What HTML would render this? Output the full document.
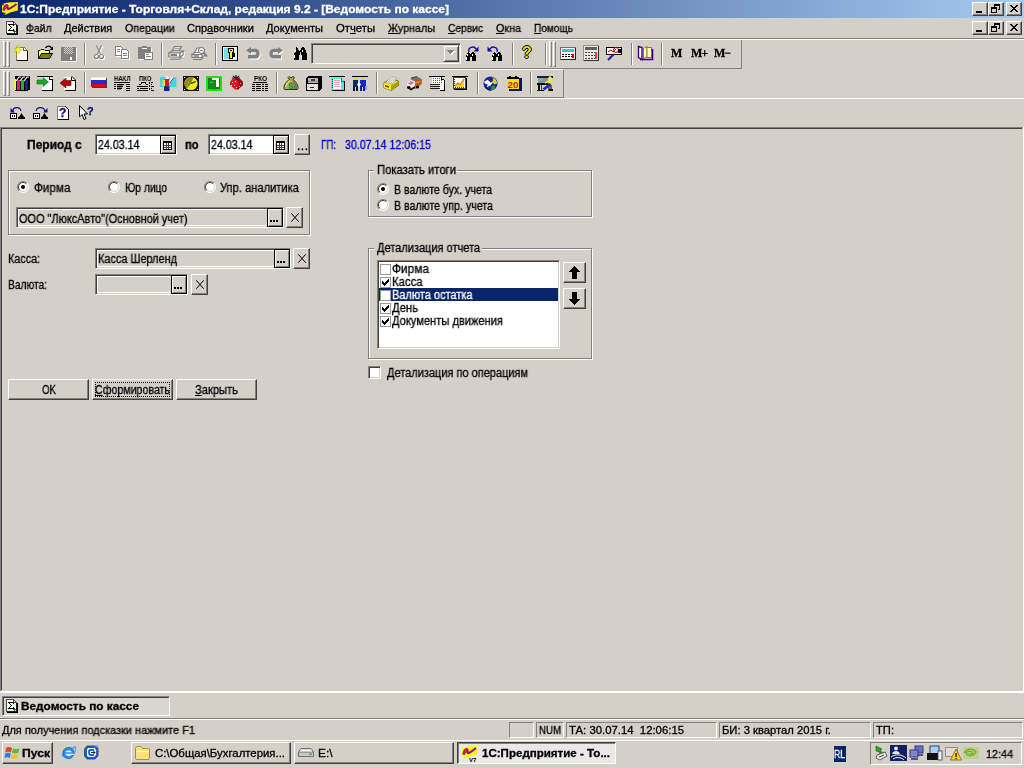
<!DOCTYPE html>
<html lang="ru">
<head>
<meta charset="utf-8">
<title>1С:Предприятие - Торговля+Склад, редакция 9.2 - [Ведомость по кассе]</title>
<style>
html,body{margin:0;padding:0;}
body{width:1024px;height:768px;overflow:hidden;background:#d4d0c8;position:relative;
 font-family:"Liberation Sans",sans-serif;font-size:11px;color:#000;}
.a{position:absolute;white-space:nowrap;}
.b{will-change:transform;}
.t{position:absolute;white-space:nowrap;line-height:14px;height:14px;will-change:transform;-webkit-text-stroke:0.3px;}
.b{font-weight:bold;}
u{text-decoration:underline;}
/* 3d borders */
.raised{position:absolute;box-sizing:border-box;background:#d4d0c8;
 border:1px solid;border-color:#fff #404040 #404040 #fff;
 box-shadow:inset -1px -1px 0 #808080, inset 1px 1px 0 #d4d0c8;}
.sunken{position:absolute;box-sizing:border-box;background:#fff;
 border:1px solid;border-color:#808080 #fff #fff #808080;
 box-shadow:inset 1px 1px 0 #404040, inset -1px -1px 0 #d4d0c8;}
.thin-sunken{position:absolute;box-sizing:border-box;border:1px solid;border-color:#808080 #fff #fff #808080;}
.thin-raised{position:absolute;box-sizing:border-box;border:1px solid;border-color:#fff #808080 #808080 #fff;}
.etched{position:absolute;box-sizing:border-box;border:1px solid #808080;box-shadow:1px 1px 0 #fff, inset 1px 1px 0 #fff;}
.sep{position:absolute;width:2px;box-sizing:border-box;border-left:1px solid #808080;border-right:1px solid #fff;}
.grip{position:absolute;width:3px;box-sizing:border-box;border:1px solid;border-color:#fff #808080 #808080 #fff;}
.hl{position:absolute;height:1px;}
.f{font-size:12px;}
svg{position:absolute;overflow:visible;}
.radio{position:absolute;width:12px;height:12px;}
.chk{position:absolute;width:13px;height:13px;box-sizing:border-box;background:#fff;
 border:1px solid;border-color:#808080 #fff #fff #808080;box-shadow:inset 1px 1px 0 #404040, inset -1px -1px 0 #d4d0c8;}
.fchk{position:absolute;left:380px;width:11px;height:11px;box-sizing:border-box;background:#fff;border:1px solid #989898;}
.gf{background:#d4d0c8;}
.gf::after{content:"";position:absolute;left:1px;top:1px;right:1px;bottom:1px;border:1px solid #fff;}
.bbtn{position:absolute;box-sizing:border-box;background:#d4d0c8;border:1px solid #000;box-shadow:inset 1px 1px 0 #fff, inset -1px -1px 0 #808080;}
</style>
</head>
<body>
<!-- TITLE BAR -->
<div id="titlebar" class="a" style="left:0;top:0;width:1024px;height:18px;background:linear-gradient(90deg,#0a246a 0%,#a6caf0 100%);"></div>
<svg style="left:2px;top:1px" width="16" height="15" viewBox="0 0 16 15">
 <path d="M0 3 L6 1.500 L15.800 1 V9.500 L8 11.500 L3 14 L0 11Z" fill="#fcf418"/>
 <path d="M0 3 L2 2.500 L1 5Z M0 11 L3 14 L3.500 12Z" fill="#181808"/>
 <path d="M1.500 9.500 C2 4 6 2.500 5.500 6 C5 9.500 8 8 14.500 3" stroke="#c01048" stroke-width="2.200" fill="none"/>
 <path d="M2 10 C4 6 5 5 5 7.500 C6 9 9 6.500 14 3.500" stroke="#5a208a" stroke-width="1" fill="none"/>
 <path d="M9 10.500 L14 9" stroke="#e8d810" stroke-width="1"/>
</svg>
<div id="title" class="t b" style="left:20px;top:2px;color:#fff;font-size:11px;transform:scaleX(1.0898);transform-origin:0 0;">1С:Предприятие - Торговля+Склад, редакция 9.2 - [Ведомость по кассе]</div>
<!-- title buttons -->
<div class="raised" style="left:972px;top:2px;width:16px;height:14px;"></div>
<div class="raised" style="left:988px;top:2px;width:16px;height:14px;"></div>
<div class="raised" style="left:1006px;top:2px;width:16px;height:14px;"></div>
<svg style="left:972px;top:2px" width="50" height="14" viewBox="0 0 50 14" shape-rendering="crispEdges">
 <rect x="4" y="9" width="6" height="2" fill="#000"/>
 <rect x="22" y="2" width="6" height="2" fill="#000"/><rect x="22" y="3" width="1" height="3" fill="#000"/><rect x="27" y="3" width="1" height="5" fill="#000"/><rect x="26" y="7" width="2" height="1" fill="#000"/>
 <rect x="19" y="5" width="6" height="2" fill="#000"/><rect x="19" y="6" width="1" height="5" fill="#000"/><rect x="24" y="6" width="1" height="5" fill="#000"/><rect x="19" y="10" width="6" height="1" fill="#000"/>
 <path d="M38 3h2v1h1v1h2v-1h1v-1h2v1h-1v1h-1v1h-1v1h1v1h1v1h1v1h-2v-1h-1v-1h-2v1h-1v1h-2v-1h1v-1h1v-1h1v-1h-1v-1h-1v-1h-1z" fill="#000"/>
</svg>

<!-- MENU BAR -->
<!-- menu doc icon -->
<svg style="left:6px;top:21px" width="13" height="14" viewBox="0 0 13 14" shape-rendering="crispEdges">
 <path d="M0.500 0.500 H7.500 L10.500 3.500 V12.500 H0.500Z" fill="#f4fbf0" stroke="#50503c" stroke-width="1"/>
 <path d="M7.500 0.500 V3.500 H10.500" fill="none" stroke="#50503c"/>
 <path d="M11.500 4 V13.500 H1" fill="none" stroke="#000"/><path d="M10.500 4V12.500H1" fill="none" stroke="#202020"/>
 <path d="M2 3h6v2h-1v-1h-3v1h1v1h1v1h-1v1h-1v1h3v-1h1v2h-6v-1h1v-1h1v-1h1v-1h-1v-1h-1v-1h-1z" fill="#000"/>
 <rect x="7" y="10" width="3" height="1" fill="#108020"/><rect x="8" y="9" width="1" height="3" fill="#108020"/>
</svg>
<div id="m1" class="t" style="left:26px;top:21px;transform:scaleX(0.9423);transform-origin:0 0;"><u>Ф</u>айл</div>
<div id="m2" class="t" style="left:64px;top:21px;transform:scaleX(1.0020);transform-origin:0 0;"><u>Д</u>ействия</div>
<div id="m3" class="t" style="left:125px;top:21px;transform:scaleX(0.9673);transform-origin:0 0;">Опе<u>р</u>ации</div>
<div id="m4" class="t" style="left:187px;top:21px;transform:scaleX(1.0019);transform-origin:0 0;">Спр<u>а</u>вочники</div>
<div id="m5" class="t" style="left:266px;top:21px;transform:scaleX(1.0047);transform-origin:0 0;">Док<u>у</u>менты</div>
<div id="m6" class="t" style="left:336px;top:21px;transform:scaleX(1.0251);transform-origin:0 0;">От<u>ч</u>еты</div>
<div id="m7" class="t" style="left:388px;top:21px;transform:scaleX(0.9779);transform-origin:0 0;"><u>Ж</u>урналы</div>
<div id="m8" class="t" style="left:448px;top:21px;transform:scaleX(0.9287);transform-origin:0 0;"><u>С</u>ервис</div>
<div id="m9" class="t" style="left:496px;top:21px;transform:scaleX(0.9774);transform-origin:0 0;"><u>О</u>кна</div>
<div id="m10" class="t" style="left:534px;top:21px;transform:scaleX(0.9176);transform-origin:0 0;"><u>П</u>омощь</div>
<div class="raised" style="left:972px;top:21px;width:16px;height:14px;"></div>
<div class="raised" style="left:988px;top:21px;width:16px;height:14px;"></div>
<div class="raised" style="left:1006px;top:21px;width:16px;height:14px;"></div>
<svg style="left:972px;top:21px" width="50" height="14" viewBox="0 0 50 14" shape-rendering="crispEdges">
 <rect x="4" y="9" width="6" height="2" fill="#000"/>
 <rect x="22" y="2" width="6" height="2" fill="#000"/><rect x="22" y="3" width="1" height="3" fill="#000"/><rect x="27" y="3" width="1" height="5" fill="#000"/><rect x="26" y="7" width="2" height="1" fill="#000"/>
 <rect x="19" y="5" width="6" height="2" fill="#000"/><rect x="19" y="6" width="1" height="5" fill="#000"/><rect x="24" y="6" width="1" height="5" fill="#000"/><rect x="19" y="10" width="6" height="1" fill="#000"/>
 <path d="M38 3h2v1h1v1h2v-1h1v-1h2v1h-1v1h-1v1h-1v1h1v1h1v1h1v1h-2v-1h-1v-1h-2v1h-1v1h-2v-1h1v-1h1v-1h1v-1h-1v-1h-1v-1h-1z" fill="#000"/>
</svg>
<div class="hl" style="left:0;top:38px;width:1024px;background:#808080;"></div>
<div class="hl" style="left:0;top:39px;width:1024px;background:#fff;"></div>

<!-- TOOLBARS -->
<!-- toolbar 1 frame -->
<div class="a" style="left:0;top:40px;width:742px;height:29px;box-sizing:border-box;border-right:1px solid #808080;border-bottom:1px solid #808080;"></div>
<div class="grip" style="left:3px;top:41px;height:26px;"></div>
<div class="grip" style="left:7px;top:41px;height:26px;"></div>
<!-- new -->
<svg style="left:14px;top:45px" width="16" height="16" viewBox="0 0 16 16">
 <defs><pattern id="chk0" width="2" height="2" patternUnits="userSpaceOnUse"><rect width="2" height="2" fill="#fff"/><rect width="1" height="1" fill="#ffffc0"/><rect x="1" y="1" width="1" height="1" fill="#ffffc0"/></pattern></defs>
 <path d="M2.500 2.500 H10.500 L13.500 5.500 V15.500 H2.500Z" fill="url(#chk0)" stroke="#808040" shape-rendering="crispEdges"/>
 <path d="M13.500 5 V15.500 H3" fill="none" stroke="#000" shape-rendering="crispEdges"/>
 <path d="M9.500 2.500 V5.500 H13.500" fill="none" stroke="#606020" shape-rendering="crispEdges"/>
 <path d="M3 0.500 L4 2.800 L6.500 1.500 L5.300 4 L8 5 L5.300 5.600 L5 8.500 L3.500 6 L0.500 7 L2.300 4.800 L0 3.300 L2.800 3.300Z" fill="#ffff20" stroke="#b0b000" stroke-width="0.500"/>
</svg>
<!-- open -->
<svg style="left:37px;top:45px" width="17" height="16" viewBox="0 0 17 16">
 <path d="M1.5 13.5 V5.5 H3 L4 4.5 H7 L8 5.5 H12.5 V8" fill="#ffffa0" stroke="#000"/>
 <path d="M1.5 13.5 L4.5 8.5 H15.5 L12.5 13.5Z" fill="#808000" stroke="#000"/>
 <path d="M8.500 3 C10 0.500 13 0.500 14.500 3" fill="none" stroke="#000" stroke-width="1.300"/><path d="M16 1.500 V5 H12.500Z" fill="#000"/>
</svg>
<!-- save disabled -->
<svg style="left:61px;top:47px" width="16" height="15" viewBox="0 0 16 15" shape-rendering="crispEdges">
 <defs><pattern id="chk1" width="2" height="2" patternUnits="userSpaceOnUse"><rect width="2" height="2" fill="#808080"/><rect width="1" height="1" fill="#d4d0c8"/><rect x="1" y="1" width="1" height="1" fill="#d4d0c8"/></pattern></defs>
 <rect x="0" y="0" width="15" height="14" fill="#808080"/>
 <rect x="3" y="0" width="9" height="7" fill="url(#chk1)"/>
 <rect x="9" y="10" width="2" height="3" fill="#fff"/>
 <rect x="1" y="14" width="15" height="1" fill="#fff"/><rect x="15" y="1" width="1" height="14" fill="#fff"/>
</svg>
<div class="sep" style="left:84px;top:43px;height:22px;"></div>
<!-- cut disabled -->
<svg style="left:94px;top:45px" width="12" height="16" viewBox="0 0 12 16">
 <g fill="none" stroke="#fff" stroke-width="1.300" transform="translate(1,1)"><path d="M2.500 0.500 L6.500 9 M7.500 0.500 L3.500 9"/><circle cx="2.500" cy="11.500" r="2"/><circle cx="7.500" cy="11.500" r="2"/></g>
 <g fill="none" stroke="#808080" stroke-width="1.100"><path d="M2.500 0.500 L6.500 9 M7.500 0.500 L3.500 9"/><circle cx="2.500" cy="11.500" r="2"/><circle cx="7.500" cy="11.500" r="2"/></g>
</svg>
<!-- copy disabled -->
<svg style="left:115px;top:46px" width="16" height="15" viewBox="0 0 16 15" shape-rendering="crispEdges">
 <path d="M1.500 1.500 H6.500 L8.500 3.500 V10.500 H1.500Z" fill="none" stroke="#fff" stroke-width="1"/>
 <path d="M7.500 4.500 H12.500 L14.500 6.500 V13.500 H7.500Z" fill="none" stroke="#fff" stroke-width="1"/>
 <path d="M0.500 0.500 H5.500 L7.500 2.500 V9.500 H0.500Z" fill="#fff" stroke="#808080"/>
 <path d="M6.500 3.500 H11.500 L13.500 5.500 V12.500 H6.500Z" fill="#fff" stroke="#808080"/>
 <path d="M2 3.500H5M2 5.500H5M8 7.500H12M8 9.500H12" fill="none" stroke="#808080"/>
</svg>
<!-- paste disabled -->
<svg style="left:138px;top:46px" width="16" height="15" viewBox="0 0 16 15" shape-rendering="crispEdges">
 <rect x="1" y="2" width="13" height="12" fill="#fff"/>
 <rect x="0" y="1" width="13" height="12" fill="#808080"/>
 <rect x="4" y="0" width="5" height="2" fill="#808080"/>
 <rect x="4" y="2" width="5" height="1" fill="#fff"/>
 <rect x="7" y="7" width="8" height="7" fill="#fff"/>
 <rect x="6.500" y="6.500" width="8" height="7" fill="#fff" stroke="#808080"/>
 <path d="M8 8.500H11M8 10.500H13" stroke="#808080" fill="none"/>
</svg>
<div class="sep" style="left:161px;top:43px;height:22px;"></div>
<!-- print disabled -->
<svg style="left:168px;top:46px" width="17" height="15" viewBox="0 0 17 15">
 <g transform="translate(1,1)" fill="none" stroke="#fff" stroke-width="1.200"><path d="M1 7 V11.500 H11 L15 9 V5"/></g>
 <g fill="#fff" stroke="#808080" stroke-width="1.200"><path d="M4 5 L6.500 0.600 H13.500 L11 5Z"/><path d="M1 7 L4 5 H15 L12 7 Z"/><path d="M1 7 V11 H12 V7Z"/><path d="M12 11 L15 9 V5 L12 7Z"/></g>
 <path d="M2.500 9 H9" stroke="#808080" stroke-width="2"/>
 <path d="M2 13.200 H11 L14 11.500" stroke="#808080" stroke-width="1.300" fill="none"/>
 <path d="M6.500 2.500H12M5.500 4H11" stroke="#808080" stroke-width="0.700" fill="none"/>
</svg>
<!-- preview disabled -->
<svg style="left:191px;top:45px" width="17" height="16" viewBox="0 0 17 16">
 <g fill="#fff" stroke="#808080" stroke-width="1.200"><path d="M3.500 7.500 L6 3 H11 L9 7.500Z"/><path d="M1 9.500 L4 7.500 H13 L11 9.500Z"/><path d="M1 9.500 V12.500 H11 V9.500Z"/><path d="M11 12.500 L13.500 10.500 V7.500"/></g>
 <path d="M2.500 11 H8" stroke="#808080" stroke-width="1.600"/>
 <path d="M2 14.500H10 L12 13" stroke="#808080" stroke-width="1.200" fill="none"/>
 <circle cx="10.500" cy="5.500" r="3" fill="#fff" stroke="#808080" stroke-width="1.200"/>
 <path d="M9 5.500H12" stroke="#808080"/>
 <path d="M13 8 L16 11.500" stroke="#808080" stroke-width="1.800"/>
</svg>
<div class="sep" style="left:215px;top:43px;height:22px;"></div>
<!-- key -->
<svg style="left:222px;top:46px" width="16" height="15" viewBox="0 0 16 15" shape-rendering="crispEdges">
 <rect x="0.500" y="0.500" width="15" height="14" fill="#e4f4f8" stroke="#000"/>
 <rect x="2" y="2" width="5" height="11" fill="#78dce8"/>
 <rect x="1" y="13" width="14" height="1" fill="#f4e8f8"/>
 <path d="M6.500 2.500 H11.500 V6.500 H10.500 V7.500 H12.500 V8.500 H10.500 V9.500 H12.500 V10.500 H10.500 V12.500 H7.500 V6.500 H6.500Z" fill="#f4f020" stroke="#000" stroke-width="1"/>
 <rect x="8" y="4" width="2" height="1" fill="#000"/>
</svg>
<!-- undo disabled -->
<svg style="left:246px;top:47px" width="15" height="13" viewBox="0 0 15 13">
 <path d="M5 0 L0 3.500 L5 7 V5.200 H9 C10.800 5.200 10.800 8 9 8 H2 V11.500 H9.500 C15 11.500 15 1.800 9.500 1.800 H5Z" fill="#fff" transform="translate(1,1)"/>
 <path d="M5 0 L0 3.500 L5 7 V5.200 H9 C10.800 5.200 10.800 8 9 8 H2 V11.500 H9.500 C15 11.500 15 1.800 9.500 1.800 H5Z" fill="#808080"/>
</svg>
<!-- redo disabled -->
<svg style="left:269px;top:47px" width="15" height="13" viewBox="0 0 15 13">
 <g transform="translate(14,0) scale(-1,1)">
 <path d="M5 0 L0 3.500 L5 7 V5.200 H9 C10.800 5.200 10.800 8 9 8 H2 V11.500 H9.500 C15 11.500 15 1.800 9.500 1.800 H5Z" fill="#fff" transform="translate(-1,1)"/>
 <path d="M5 0 L0 3.500 L5 7 V5.200 H9 C10.800 5.200 10.800 8 9 8 H2 V11.500 H9.500 C15 11.500 15 1.800 9.500 1.800 H5Z" fill="#808080"/></g>
</svg>
<!-- binoculars -->
<svg style="left:292px;top:47px" width="15" height="13" viewBox="0 0 15 13" shape-rendering="crispEdges"><path d="M3 0h2v1h1v2h1v1h1v-1h1v-2h1v-1h2v1h1v2h1v3h1v7h-5v-5h-1v-3h-1v3h-1v5h-5v-7h1v-3h1v-2h1z" fill="#000"/><rect x="3" y="3" width="1" height="2" fill="#fff"/><rect x="10" y="3" width="1" height="2" fill="#fff"/><rect x="2" y="8" width="1" height="3" fill="#fff"/><rect x="9" y="8" width="1" height="3" fill="#fff"/></svg>
<!-- combo -->
<div class="sunken" style="left:311px;top:43px;width:150px;height:21px;background:#d4d0c8;"></div>
<div class="a" style="left:443px;top:45px;width:16px;height:17px;box-sizing:border-box;background:#d4d0c8;border:1px solid;border-color:#d4d0c8 #404040 #404040 #d4d0c8;box-shadow:inset 1px 1px 0 #fff, inset -1px -1px 0 #808080;"></div>
<svg style="left:447px;top:50px" width="8" height="5" viewBox="0 0 8 5" shape-rendering="crispEdges"><path d="M1 1h7v1h-1v1h-1v1h-1v1h-1v-1h-1v-1h-1v-1h-1z" fill="#fff"/><path d="M0 0h7v1h-1v1h-1v1h-1v1h-1v-1h-1v-1h-1v-1h-1z" fill="#808080"/></svg>
<!-- find next / prev -->
<svg style="left:465px;top:52px" width="11" height="9" viewBox="0 0 11 9" shape-rendering="crispEdges"><path d="M2 0h2v1h1v1h1v-1h1v-1h2v1h1v2h1v6h-4v-4h-2v4h-4v-6h1v-2h1z" fill="#000"/><rect x="2" y="2" width="1" height="2" fill="#fff"/><rect x="7" y="2" width="1" height="2" fill="#fff"/><rect x="1" y="5" width="1" height="3" fill="#fff"/><rect x="6" y="5" width="1" height="3" fill="#fff"/></svg>
<svg style="left:467px;top:45px" width="12" height="8" viewBox="0 0 12 8"><path d="M2 7 C0.500 2 7 0.500 9 4" fill="none" stroke="#1010a0" stroke-width="1.400"/><path d="M11.500 1.500 V6.500 H6.500Z" fill="#1010a0"/></svg>
<svg style="left:491px;top:52px" width="11" height="9" viewBox="0 0 11 9" shape-rendering="crispEdges"><path d="M2 0h2v1h1v1h1v-1h1v-1h2v1h1v2h1v6h-4v-4h-2v4h-4v-6h1v-2h1z" fill="#000"/><rect x="2" y="2" width="1" height="2" fill="#fff"/><rect x="7" y="2" width="1" height="2" fill="#fff"/><rect x="1" y="5" width="1" height="3" fill="#fff"/><rect x="6" y="5" width="1" height="3" fill="#fff"/></svg>
<svg style="left:487px;top:45px" width="12" height="8" viewBox="0 0 12 8"><path d="M10 7 C11.500 2 5 0.500 3 4" fill="none" stroke="#1010a0" stroke-width="1.400"/><path d="M0.500 1.500 V6.500 H5.500Z" fill="#1010a0"/></svg>
<div class="sep" style="left:512px;top:43px;height:22px;"></div>
<!-- help ? -->
<div id="qm" class="a b" style="left:522px;top:43px;font-size:16px;line-height:20px;color:#e8e000;text-shadow:1px 0 0 #000,-1px 0 0 #000,0 1px 0 #000,0 -1px 0 #000;">?</div>
<div class="sep" style="left:545px;top:43px;height:22px;"></div>
<div class="grip" style="left:549px;top:41px;height:26px;"></div>
<div class="grip" style="left:553px;top:41px;height:26px;"></div>
<!-- calculator -->
<svg style="left:560px;top:47px" width="16" height="13" viewBox="0 0 16 13" shape-rendering="crispEdges">
 <rect x="0.5" y="0.5" width="15" height="12" fill="#fff" stroke="#707070"/><path d="M1 12.500H15.500V1" stroke="#202020" fill="none"/>
 <rect x="2" y="2" width="12" height="3" fill="#40c0c0"/>
 <path d="M2 7.5H14M2 9.5H14" stroke="#000" stroke-dasharray="2 1" fill="none"/><rect x="12" y="7" width="2" height="4" fill="#c00000"/>
</svg>
<!-- calendar/calc2 -->
<svg style="left:583px;top:45px" width="16" height="16" viewBox="0 0 16 16" shape-rendering="crispEdges">
 <rect x="0.5" y="0.5" width="15" height="15" fill="#ece8e0" stroke="#909090"/><path d="M1 15.500H15.500V1" stroke="#303030" fill="none"/>
 <rect x="2" y="2" width="12" height="3" fill="#606060"/>
 <path d="M2 7.5H14M2 10.5H14M2 13.5H14" stroke="#404040" stroke-dasharray="2 1" fill="none"/><rect x="12" y="7" width="2" height="7" fill="#e04040"/>
</svg>
<!-- tool -->
<svg style="left:605px;top:45px" width="18" height="16" viewBox="0 0 18 16">
 <rect x="1.5" y="2.5" width="15" height="7" fill="#fff" stroke="#000"/>
 <path d="M3 7 L6 5 L8 7 L11 4" stroke="#c00000" fill="none"/><circle cx="11" cy="5" r="2.5" fill="none" stroke="#c00000"/>
 <rect x="13" y="4" width="3" height="4" fill="#000"/>
 <path d="M9 9 L3 15" stroke="#2020a0" stroke-width="2.2"/>
</svg>
<div class="sep" style="left:631px;top:43px;height:22px;"></div>
<!-- book -->
<svg style="left:637px;top:45px" width="17" height="16" viewBox="0 0 17 16">
 <path d="M1.5 1.5 L5 2.5 V14.5 L1.5 12.5Z" fill="#fff" stroke="#400080" stroke-width="1.4"/>
 <path d="M6.5 3.5 L10 1.5 V11.5 L6.5 13.5Z" fill="#ffffc0" stroke="#806000" stroke-width="0.8"/>
 <path d="M10 2.5 H14.5 V12.5 H10Z" fill="#ffffc0" stroke="#806000" stroke-width="0.8"/>
 <path d="M3 14.5 H15.5 V4" fill="none" stroke="#400080" stroke-width="1.6"/>
</svg>
<div class="sep" style="left:661px;top:43px;height:22px;"></div>
<div id="mm1" class="a b" style="left:671px;top:45px;font-family:'Liberation Serif',serif;font-size:12px;line-height:16px;-webkit-text-stroke:0.3px;">M</div>
<div id="mm2" class="a b" style="left:691px;top:45px;letter-spacing:-1px;font-family:'Liberation Serif',serif;font-size:12px;line-height:16px;-webkit-text-stroke:0.3px;">M+</div>
<div id="mm3" class="a b" style="left:714px;top:45px;letter-spacing:-1px;font-family:'Liberation Serif',serif;font-size:12px;line-height:16px;-webkit-text-stroke:0.3px;">M−</div>

<!-- toolbar 2 frame -->
<div class="a" style="left:0;top:69px;width:564px;height:29px;box-sizing:border-box;border-top:1px solid #fff;border-right:1px solid #808080;border-bottom:1px solid #808080;"></div>
<div class="grip" style="left:3px;top:71px;height:25px;"></div>
<div class="grip" style="left:7px;top:71px;height:25px;"></div>
<!-- books -->
<svg style="left:14px;top:76px" width="16" height="15" viewBox="0 0 16 15" shape-rendering="crispEdges">
 <rect x="1" y="0" width="15" height="14" fill="#000"/>
 <rect x="0" y="3" width="2" height="11" fill="#f0f060"/>
 <rect x="3" y="4" width="3" height="10" fill="#d02868"/>
 <rect x="7" y="4" width="3" height="10" fill="#20b040"/>
 <rect x="11" y="4" width="3" height="10" fill="#182088"/>
 <rect x="1" y="14" width="13" height="1" fill="#000"/>
 <path d="M2 5 L5 1 H7 M6 5 L9 1 H11 M10 5 L13 1 H15" stroke="#fff" stroke-width="1.200" fill="none" shape-rendering="auto"/>
</svg>
<!-- green arrow doc -->
<svg style="left:37px;top:76px" width="16" height="15" viewBox="0 0 16 15">
 <path d="M5 1 H13 L15 3 V14 H5Z" fill="#fff" shape-rendering="crispEdges"/>
 <path d="M0 0.500 H16" stroke="#000" stroke-width="1.400" shape-rendering="crispEdges"/>
 <path d="M5 14.500H15.500V2.500 M12.500 1 V3.500 H15" stroke="#000" fill="none" shape-rendering="crispEdges"/>
 <path d="M0 4 H6 V1.500 L11.500 6 L6 10.500 V8 H0Z" fill="#18a828" stroke="#0c6814" stroke-width="0.600"/>
</svg>
<!-- red arrow doc -->
<svg style="left:60px;top:76px" width="16" height="15" viewBox="0 0 16 15">
 <path d="M4 0.500 H11.500 L15 4 V14 H4Z" fill="#fff" shape-rendering="crispEdges"/>
 <path d="M5 14.500H15.500V4 L12 0.500 M11.500 1 V4.500 H15" stroke="#000" fill="none"/>
 <path d="M11 4.500 H6 V2 L0 7 L6 12 V9.500 H11Z" fill="#b00808" stroke="#600404" stroke-width="0.600"/>
</svg>
<div class="sep" style="left:84px;top:72px;height:22px;"></div>
<!-- flag -->
<svg style="left:91px;top:77px" width="16" height="12" viewBox="0 0 16 12" shape-rendering="crispEdges">
 <rect x="0" y="0" width="15" height="4" fill="#fff"/><rect x="0" y="3" width="15" height="4" fill="#2030d0"/><rect x="0" y="7" width="15" height="3" fill="#d01010"/>
 <rect x="1" y="10" width="15" height="1" fill="#404040"/><rect x="15" y="1" width="1" height="10" fill="#404040"/>
 <rect x="0" y="0" width="15" height="1" fill="#e8e8e8"/>
</svg>
<!-- НАКЛ -->
<div id="i_nakl" class="a b" style="left:114px;top:74px;font-size:7px;line-height:9px;transform:scaleX(0.8551);transform-origin:0 0;">НАКЛ</div>
<svg style="left:114px;top:82px" width="16" height="9" viewBox="0 0 16 9" shape-rendering="crispEdges">
 <path d="M0 0.500H16" stroke="#000"/><path d="M0 2.500H2M0 4.500H2M0 6.500H2" stroke="#000"/><path d="M3 2.500H10M3 4.500H9M3 6.500H8" stroke="#000"/><path d="M12 2.500H16M12 4.500H16M12 6.500H16M12 8.500H16" stroke="#000"/><path d="M3 3.500H9M3 5.500H8M3 7.500H7" stroke="#808080"/>
</svg>
<!-- ПКО -->
<div id="i_pko" class="a b" style="left:139px;top:74px;font-size:7px;line-height:9px;transform:scaleX(0.8475);transform-origin:0 0;">ПКО</div>
<svg style="left:137px;top:82px" width="17" height="9" viewBox="0 0 17 9" shape-rendering="crispEdges">
 <path d="M4 0.500H9" stroke="#000"/><path d="M2 2.500H4M9 2.500H11M0 4.500H11M0 6.500H2M3 6.500H11M0 8.500H11" stroke="#000"/><path d="M4 1.500H5M8 1.500H9" stroke="#000"/>
 <path d="M12.500 0V9" stroke="#000" stroke-dasharray="2 1"/><path d="M14 0.500H16M14 2.500H15M14 4.500H17M14 6.500H15M14 8.500H17" stroke="#000"/>
</svg>
<!-- person -->
<svg style="left:160px;top:76px" width="17" height="15" viewBox="0 0 17 15">
 <rect x="0" y="1" width="6" height="10" fill="#48d0e8"/>
 <path d="M9 3 L16.500 1 V11 H9Z" fill="#48d0e8"/>
 <rect x="5.500" y="0" width="3" height="3" fill="#f8e8e8"/>
 <rect x="4.500" y="3" width="4.500" height="8" fill="#d01828"/>
 <rect x="2.500" y="4" width="2.500" height="6" fill="#f0e020"/>
 <rect x="4" y="10.500" width="5.500" height="4.500" fill="#1020a0"/>
 <path d="M9.500 7 L13.500 1.500" stroke="#202020" stroke-width="1"/>
 <path d="M9 6.300 L13 0.800" stroke="#fff" stroke-width="1.300"/>
</svg>
<!-- yellow clock -->
<svg style="left:183px;top:76px" width="16" height="15" viewBox="0 0 16 15">
 <rect x="0" y="0" width="16" height="15" fill="#101010" shape-rendering="crispEdges"/>
 <circle cx="8" cy="7.500" r="6.600" fill="#f0e820"/>
 <path d="M8 7.500 L10.500 1.500 A6.600 6.600 0 0 0 4 12.700 Z" fill="#888818"/>
 <path d="M8 7.500 L12.500 5.500" stroke="#202000" stroke-width="1.300"/>
 <path d="M5 6 L6 7 M4 9.500 L5 10" stroke="#d0d060" stroke-width="0.800"/>
 <g fill="#fff" shape-rendering="crispEdges"><rect x="1" y="1" width="1" height="1"/><rect x="14" y="1" width="1" height="1"/><rect x="1" y="13" width="1" height="1"/><rect x="14" y="13" width="1" height="1"/></g>
</svg>
<!-- green door -->
<svg style="left:206px;top:76px" width="16" height="15" viewBox="0 0 16 15" shape-rendering="crispEdges">
 <rect x="0" y="0" width="16" height="15" fill="#20e020"/>
 <rect x="2" y="2" width="12" height="11" fill="#108010"/>
 <path d="M6 2 H13 V11 H10 V4 H6Z" fill="#fff"/>
 <path d="M3 3 L9 5 V14 L3 12Z" fill="#188c18" shape-rendering="auto"/>
 <path d="M4 6 L7 7" stroke="#60c060" shape-rendering="auto"/>
</svg>
<!-- berry -->
<svg style="left:229px;top:75px" width="15" height="15" viewBox="0 0 15 15">
 <path d="M4 1 L7 4 L10 1 M7 0 V4 M3 3 L7 4 L11 3" stroke="#101010" stroke-width="1.200" fill="none"/>
 <path d="M4 3 H10 L14 7 V10 L9 14.500 H6 L1 10 V7Z" fill="#d81820"/>
 <path d="M8 3 H10 L14 7 V10 L9 14.500 H8 L10 9Z" fill="#901018"/>
 <path d="M6 1 L9 5 L7 5Z" fill="#202020"/>
 <g fill="#fff"><rect x="3" y="7" width="1" height="1"/><rect x="6" y="6" width="1" height="1"/><rect x="5" y="10" width="1" height="1"/><rect x="2" y="10" width="1" height="1"/><rect x="7" y="12" width="1" height="1"/><rect x="11" y="8" width="1" height="1" opacity="0.700"/><rect x="10" y="11" width="1" height="1" opacity="0.700"/></g>
</svg>
<!-- РКО -->
<div id="i_rko" class="a b" style="left:254px;top:74px;font-size:7px;line-height:9px;transform:scaleX(0.9034);transform-origin:0 0;">РКО</div>
<svg style="left:252px;top:82px" width="16" height="9" viewBox="0 0 16 9" shape-rendering="crispEdges">
 <path d="M1 0.5H15" stroke="#000"/><path d="M0 2.5H16M0 4.5H16M0 6.5H16M0 8.5H16" stroke="#000" stroke-dasharray="3 1 5 1 2 1"/>
</svg>
<div class="sep" style="left:276px;top:72px;height:22px;"></div>
<!-- money bag -->
<svg style="left:283px;top:76px" width="16" height="14" viewBox="0 0 16 14">
 <path d="M6 0.500 L8 2 L10 0.500 L11.500 1.500 L10 3.500 C13 5.500 15.500 9.500 15 12.500 L14.500 13.500 H1.500 L1 12.500 C0.500 9.500 3 5.500 6.500 3.500 L5 1.500Z" fill="#a8a860" stroke="#282808" stroke-width="0.900"/>
 <path d="M9.500 4 C12.500 6 14.500 9.500 14.300 12.500 L14 13 H10.500 C11 10 10.500 7 9.500 4Z" fill="#787858"/>
 <path d="M3 11 C3 8 5 6 7 4.500" stroke="#e0e060" stroke-width="1.200" fill="none"/>
 <text x="5.500" y="12.500" font-family="Liberation Sans, sans-serif" font-weight="bold" font-size="9" fill="#189818">$</text>
</svg>
<!-- drawer -->
<svg style="left:306px;top:76px" width="16" height="15" viewBox="0 0 16 15" shape-rendering="crispEdges">
 <defs><pattern id="chk2" width="2" height="2" patternUnits="userSpaceOnUse"><rect width="2" height="2" fill="#fff"/><rect width="1" height="1" fill="#c8c8c8"/><rect x="1" y="1" width="1" height="1" fill="#c8c8c8"/></pattern></defs>
 <path d="M0 2 L2 0 H16 V12 L13 15 H0Z" fill="#000"/>
 <rect x="2" y="2" width="10" height="5" fill="#b8b8b8"/>
 <rect x="5" y="3" width="4" height="2" fill="#404040"/>
 <rect x="2" y="5" width="10" height="1" fill="#909090"/>
 <rect x="1" y="8" width="11" height="6" fill="url(#chk2)"/>
 <rect x="4" y="11" width="4" height="1" fill="#202020"/>
</svg>
<!-- cyan doc -->
<svg style="left:329px;top:76px" width="16" height="15" viewBox="0 0 16 15" shape-rendering="crispEdges">
 <path d="M0 0.500H16" stroke="#000" stroke-width="1.400"/>
 <path d="M2 2 H12 L15 5 V14 H2Z" fill="#58e0e0"/>
 <path d="M2.500 14.500 H15.500 V5" stroke="#000" fill="none"/>
 <path d="M12 2 V5 H15" stroke="#208080" fill="none"/>
 <rect x="4" y="3" width="8" height="10" fill="#fff"/>
 <path d="M5 4.500H11M5 6.500H11M5 8.500H11M5 10.500H11" stroke="#e8a0b0"/>
 <path d="M3.500 3V13" stroke="#203040" stroke-dasharray="1 1"/>
</svg>
<!-- people -->
<svg style="left:352px;top:76px" width="16" height="15" viewBox="0 0 16 15" shape-rendering="crispEdges">
 <path d="M0 0.500H16" stroke="#000" stroke-width="1.400"/>
 <rect x="2" y="1" width="3" height="3" fill="#e0d838"/><rect x="9" y="1" width="3" height="3" fill="#e0d838"/>
 <rect x="1" y="4" width="5" height="7" fill="#102860"/><rect x="8" y="4" width="6" height="7" fill="#1828c0"/>
 <rect x="1" y="10" width="2" height="5" fill="#081848"/><rect x="4" y="10" width="2" height="5" fill="#081848"/>
 <rect x="8" y="10" width="2" height="5" fill="#1020a0"/><rect x="11" y="10" width="2" height="5" fill="#1020a0"/>
 <path d="M7 6 L9 8.500 L7 11 L5 8.500Z" fill="#fff" shape-rendering="auto"/>
 <rect x="13" y="10" width="2" height="4" fill="#a0a0b8"/>
</svg>
<div class="sep" style="left:376px;top:72px;height:22px;"></div>
<!-- yellow printer -->
<svg style="left:383px;top:76px" width="16" height="15" viewBox="0 0 16 15">
 <path d="M0.500 7 L8 2.500 L15.500 5 V9.500 L8 14.500 L0.500 11.500Z" fill="#e8e020" stroke="#404000" stroke-width="0.700"/>
 <path d="M8 9.500 L15.500 5 V9.500 L8 14.500Z" fill="#a8a010"/>
 <path d="M0.500 7 L8 9.500 V14.500 L0.500 11.500Z" fill="#f0e830"/>
 <path d="M3 6 L9 0.500 L14 2.500 L9 8Z" fill="#fff" stroke="#808080" stroke-width="0.500"/>
 <path d="M5 6 L10 1.500 M6.500 6.500 L11.500 2 M8 7 L13 2.500" stroke="#909090" stroke-width="0.700"/>
 <path d="M2 9 L6 10.300 V11.800 L2 10.500Z" fill="#c02010"/>
</svg>
<!-- truck -->
<svg style="left:406px;top:76px" width="16" height="15" viewBox="0 0 16 15">
 <path d="M5 2 L11 0.500 L15.500 3 V8 L9 13 L4 11Z" fill="#787068"/>
 <path d="M8 5 L15.500 3 V8 L10 12.500Z" fill="#c05818"/>
 <path d="M9 7 L14 5.500" stroke="#f0a040" stroke-width="1.200"/>
 <path d="M1 7 L5 3.500 L9 5.500 L9 11 L5 14 L1 11Z" fill="#f4e4ec"/>
 <path d="M2 7.500 L5 5 L8 6.500 L5 9Z" fill="#d070a0"/>
 <path d="M1 10 L5 12.500 L9 10 V12 L5 14.500 L1 12Z" fill="#101010"/>
 <circle cx="3" cy="11.500" r="1.600" fill="#000"/><circle cx="11.500" cy="11" r="1.600" fill="#000"/>
 <path d="M5 2 L11 0.500" stroke="#404040"/>
</svg>
<!-- table doc -->
<svg style="left:429px;top:76px" width="17" height="15" viewBox="0 0 17 15" shape-rendering="crispEdges">
 <path d="M0 0.500H16" stroke="#000" stroke-width="1.400"/>
 <path d="M3 1 H12 L15 4 V14 H3Z" fill="#fff"/>
 <path d="M11 14.500 H15.500 V4 M12.500 1 V3.500 H15" stroke="#000" fill="none"/>
 <path d="M4 2.500H12M4 4.500H13M4 6.500H13" stroke="#2060d0" stroke-dasharray="1 1"/>
 <path d="M1 8.500H11M1 10.500H11M1 12.500H11" stroke="#202020"/><path d="M1 9.500H10M1 11.500H10M1 13.500H10" stroke="#e8d820"/>
</svg>
<!-- chart -->
<svg style="left:452px;top:76px" width="16" height="15" viewBox="0 0 16 15">
 <path d="M0 0.500H16" stroke="#000" stroke-width="1.400" shape-rendering="crispEdges"/>
 <rect x="1.500" y="1.500" width="12" height="11" fill="#fffff0" stroke="#404040" shape-rendering="crispEdges"/>
 <path d="M14.500 2V13.500H2" stroke="#000" fill="none" shape-rendering="crispEdges"/>
 <path d="M3 10 L6 7 L8 9 L12 3 V11 H3Z" fill="#f8d818"/>
 <path d="M3 10 L6 7 L8 9 L12 3" stroke="#e87800" stroke-width="1.300" fill="none"/>
 <path d="M2.500 3V11 M3 11.500H12" stroke="#404040" stroke-dasharray="1 1" shape-rendering="crispEdges"/>
</svg>
<div class="sep" style="left:477px;top:72px;height:22px;"></div>
<!-- globe -->
<svg style="left:483px;top:76px" width="15" height="15" viewBox="0 0 16 16">
 <circle cx="8" cy="8" r="7.5" fill="#1828a0"/>
 <path d="M9 1 C13 2 15 5 15 8 L12 9 L10 6 L11 3Z" fill="#d8d020"/>
 <path d="M9 11 L13 10 L12 14 L9 15Z" fill="#20a040"/>
 <path d="M1 6 L5 4 L8 7 L11 6 L8 10 L4 12 L5 9 L2 8Z" fill="#fff"/>
 <path d="M2 11 C4 14 6 15 8 15.5" stroke="#000" fill="none"/>
</svg>
<!-- yellow book -->
<svg style="left:507px;top:76px" width="15" height="15" viewBox="0 0 15 15" shape-rendering="crispEdges">
 <rect x="2" y="2" width="13" height="13" fill="#101060"/>
 <rect x="0" y="1" width="12" height="2" fill="#000"/>
 <rect x="2" y="0" width="2" height="2" fill="#000"/><rect x="8" y="0" width="2" height="2" fill="#000"/>
 <rect x="0" y="3" width="12" height="10" fill="#f8e020"/>
 <text x="0.500" y="11.500" font-family="Liberation Sans, sans-serif" font-weight="bold" font-size="9" fill="#d02010" textLength="11" lengthAdjust="spacingAndGlyphs" shape-rendering="auto">20</text>
</svg>
<div class="sep" style="left:530px;top:72px;height:22px;"></div>
<!-- picture -->
<svg style="left:537px;top:76px" width="17" height="15" viewBox="0 0 17 15">
 <rect x="0" y="0" width="16" height="2" fill="#202020" shape-rendering="crispEdges"/>
 <rect x="1" y="2" width="10" height="5" fill="#8c9498" shape-rendering="crispEdges"/>
 <rect x="1" y="2" width="5" height="3" fill="#70b0b8" shape-rendering="crispEdges"/>
 <rect x="0" y="7" width="13" height="2" fill="#101010" shape-rendering="crispEdges"/>
 <rect x="1" y="8" width="2" height="7" fill="#101010" shape-rendering="crispEdges"/><rect x="4" y="9" width="1" height="6" fill="#404040" shape-rendering="crispEdges"/>
 <rect x="11" y="9" width="4" height="6" fill="#606060" shape-rendering="crispEdges"/><rect x="12" y="13" width="4" height="2" fill="#101010" shape-rendering="crispEdges"/>
 <path d="M11 3 L15 2.500 L15.500 8 L11.500 9Z" fill="#f4e430"/>
 <circle cx="13" cy="1.800" r="1.500" fill="#f0e8c0"/>
 <path d="M12 5 L8 7" stroke="#f4e430" stroke-width="1.400"/>
 <path d="M13.500 8 L6.500 13.500" stroke="#1828b0" stroke-width="2.600"/>
 <path d="M0 14.500H7" stroke="#101010" shape-rendering="crispEdges"/>
</svg>

<div class="hl" style="left:0;top:98px;width:1024px;background:#fff;"></div>
<!-- tb3 icons -->
<svg style="left:10px;top:106px" width="16" height="14" viewBox="0 0 16 14">
 <path d="M3 5 C3 1 10 0 11 5" fill="none" stroke="#101080" stroke-width="1.1"/><path d="M0.5 2 V6.5 H5Z" fill="#101080"/>
 <rect x="0.5" y="7.500" width="6" height="5" fill="#fff" stroke="#000" shape-rendering="crispEdges"/><rect x="2" y="9" width="1" height="2" fill="#000"/><rect x="4" y="9" width="1" height="2" fill="#000"/>
 <path d="M11.500 7 L14 11 H15 V13 H8 V11 H9Z" fill="#000"/>
</svg>
<svg style="left:33px;top:106px" width="16" height="14" viewBox="0 0 16 14">
 <path d="M3 5 C4 0 11 1 12 5" fill="none" stroke="#101080" stroke-width="1.1"/><path d="M14.5 2 V6.5 H10Z" fill="#101080"/>
 <rect x="0.5" y="7.500" width="6" height="5" fill="#fff" stroke="#000" shape-rendering="crispEdges"/><rect x="2" y="9" width="1" height="2" fill="#000"/><rect x="4" y="9" width="1" height="2" fill="#000"/>
 <path d="M11.500 7 L14 11 H15 V13 H8 V11 H9Z" fill="#000"/>
</svg>
<svg style="left:57px;top:106px" width="12" height="14" viewBox="0 0 12 14" shape-rendering="crispEdges">
 <path d="M0.5 0.5 H8.500 L11.5 3.5 V13.5 H0.5Z" fill="#fff" stroke="#808060"/><path d="M8.500 0.500 L11.500 3.500 V13.500 H0.500" fill="none" stroke="#000"/>
</svg>
<div class="a b" style="left:59px;top:106px;font-size:12px;line-height:14px;color:#101080;-webkit-text-stroke:0.3px;">?</div>
<svg style="left:79px;top:105px" width="10" height="16" viewBox="0 0 10 16">
 <path d="M0.5 0.5 V12 L3 9.500 L5 14.500 L7 13.500 L5 9 H8.500Z" fill="#f4f4f4" stroke="#000"/>
</svg>
<div class="a b" style="left:87px;top:104px;font-size:11px;line-height:14px;color:#101080;-webkit-text-stroke:0.3px;">?</div>

<!-- CLIENT -->
<!-- MDI client sunken border -->
<div class="hl" style="left:0;top:127px;width:1023px;background:#808080;"></div>
<div class="hl" style="left:1px;top:128px;width:1021px;background:#404040;"></div>
<div class="a" style="left:0;top:127px;width:1px;height:564px;background:#808080;"></div>
<div class="a" style="left:1px;top:128px;width:1px;height:562px;background:#404040;"></div>
<div class="hl" style="left:1px;top:690px;width:1023px;background:#d4d0c8;"></div>
<div class="hl" style="left:0;top:691px;width:1024px;height:2px;background:#fff;"></div>
<div class="a" style="left:1023px;top:127px;width:1px;height:565px;background:#fff;"></div>

<!-- FORM -->
<!-- Row 1: period -->
<div id="f_period" class="t b f" style="left:27px;top:138px;transform:scaleX(0.9943);transform-origin:0 0;">Период с</div>
<div class="sunken" style="left:95px;top:134px;width:82px;height:21px;"></div>
<div id="f_d1" class="t f" style="left:98px;top:138px;transform:scaleX(0.8883);transform-origin:0 0;">24.03.14</div>
<div class="bbtn" style="left:160px;top:135px;width:16px;height:19px;"></div>
<div id="f_po" class="t b f" style="left:185px;top:138px;transform:scaleX(0.9260);transform-origin:0 0;">по</div>
<div class="sunken" style="left:208px;top:134px;width:82px;height:21px;"></div>
<div id="f_d2" class="t f" style="left:211px;top:138px;transform:scaleX(0.8883);transform-origin:0 0;">24.03.14</div>
<div class="bbtn" style="left:273px;top:135px;width:16px;height:19px;"></div>
<svg style="left:163px;top:141px" width="9" height="9" viewBox="0 0 9 9" shape-rendering="crispEdges"><rect x="0" y="0" width="9" height="9" fill="#000"/><rect x="1" y="2" width="7" height="6" fill="#fff"/><path d="M3.500 2V8M5.500 2V8M1 4.500H8M1 6.500H8" stroke="#000" stroke-width="1" opacity="0.75"/></svg>
<svg style="left:276px;top:141px" width="9" height="9" viewBox="0 0 9 9" shape-rendering="crispEdges"><rect x="0" y="0" width="9" height="9" fill="#000"/><rect x="1" y="2" width="7" height="6" fill="#fff"/><path d="M3.500 2V8M5.500 2V8M1 4.500H8M1 6.500H8" stroke="#000" stroke-width="1" opacity="0.75"/></svg>
<div class="raised" style="left:294px;top:134px;width:16px;height:21px;"></div>
<div class="t f" style="left:297px;top:139px;letter-spacing:0.5px;">...</div>
<div id="f_gp" class="t f" style="left:321px;top:138px;color:#0000c8;transform:scaleX(0.8122);transform-origin:0 0;">ГП:</div>
<div id="f_gpv" class="t f" style="left:345px;top:138px;color:#0000c8;transform:scaleX(0.8887);transform-origin:0 0;">30.07.14 12:06:15</div>

<!-- Group: firm -->
<div class="etched" style="left:8px;top:170px;width:302px;height:65px;"></div>
<svg class="radio" style="left:17px;top:181px" width="12" height="12" viewBox="0 0 12 12"><use href="#rad"/><circle cx="6" cy="6" r="2" fill="#000"/></svg>
<div id="f_r1" class="t f" style="left:34px;top:181px;transform:scaleX(0.9750);transform-origin:0 0;">Фирма</div>
<svg class="radio" style="left:108px;top:181px" width="12" height="12" viewBox="0 0 12 12"><use href="#rad"/></svg>
<div id="f_r2" class="t f" style="left:125px;top:181px;transform:scaleX(0.8528);transform-origin:0 0;">Юр лицо</div>
<svg class="radio" style="left:204px;top:181px" width="12" height="12" viewBox="0 0 12 12"><use href="#rad"/></svg>
<div id="f_r3" class="t f" style="left:220px;top:181px;transform:scaleX(0.9294);transform-origin:0 0;">Упр. аналитика</div>
<div class="sunken gf" style="left:16px;top:207px;width:268px;height:21px;"></div>
<div id="f_firm" class="t f" style="left:19px;top:212px;transform:scaleX(0.9126);transform-origin:0 0;">ООО "ЛюксАвто"(Основной учет)</div>
<div class="bbtn" style="left:267px;top:208px;width:16px;height:19px;"></div>
<svg style="left:270px;top:220px" width="8" height="2" viewBox="0 0 8 2" shape-rendering="crispEdges"><path d="M0 0h2v2h-2zM3 0h2v2h-2zM6 0h2v2h-2z" fill="#000"/></svg>
<div class="raised" style="left:286px;top:207px;width:17px;height:21px;"></div>
<svg style="left:291px;top:213px" width="8" height="9" viewBox="0 0 8 9"><path d="M0.3 0.3L7.700 8.700M7.700 0.300L0.300 8.700" stroke="#000" stroke-width="1"/></svg>

<!-- Kassa -->
<div id="f_kl" class="t f" style="left:8px;top:252px;transform:scaleX(0.8971);transform-origin:0 0;">Касса:</div>
<div class="sunken gf" style="left:95px;top:248px;width:196px;height:21px;"></div>
<div id="f_kv" class="t f" style="left:98px;top:252px;transform:scaleX(0.9089);transform-origin:0 0;">Касса Шерленд</div>
<div class="bbtn" style="left:274px;top:249px;width:16px;height:19px;"></div>
<svg style="left:277px;top:261px" width="8" height="2" viewBox="0 0 8 2" shape-rendering="crispEdges"><path d="M0 0h2v2h-2zM3 0h2v2h-2zM6 0h2v2h-2z" fill="#000"/></svg>
<div class="raised" style="left:293px;top:248px;width:17px;height:21px;"></div>
<svg style="left:298px;top:254px" width="8" height="9" viewBox="0 0 8 9"><path d="M0.3 0.3L7.700 8.700M7.700 0.300L0.300 8.700" stroke="#000" stroke-width="1"/></svg>
<!-- Valuta -->
<div id="f_vl" class="t f" style="left:8px;top:278px;transform:scaleX(0.8516);transform-origin:0 0;">Валюта:</div>
<div class="sunken gf" style="left:95px;top:274px;width:93px;height:21px;"></div>
<div class="bbtn" style="left:171px;top:275px;width:16px;height:19px;"></div>
<svg style="left:174px;top:287px" width="8" height="2" viewBox="0 0 8 2" shape-rendering="crispEdges"><path d="M0 0h2v2h-2zM3 0h2v2h-2zM6 0h2v2h-2z" fill="#000"/></svg>
<div class="raised" style="left:191px;top:274px;width:17px;height:21px;"></div>
<svg style="left:196px;top:280px" width="8" height="9" viewBox="0 0 8 9"><path d="M0.3 0.3L7.700 8.700M7.700 0.300L0.300 8.700" stroke="#000" stroke-width="1"/></svg>

<!-- Buttons -->
<div class="raised" style="left:8px;top:379px;width:81px;height:21px;"></div>
<div id="f_ok" class="t f" style="left:42px;top:383px;transform:scaleX(0.8072);transform-origin:0 0;">OK</div>
<div class="raised" style="left:92px;top:379px;width:81px;height:21px;"></div>
<div class="a" style="left:95px;top:382px;width:75px;height:15px;box-sizing:border-box;border:1px dotted #000;"></div>
<div id="f_sf" class="t f" style="left:95px;top:383px;transform:scaleX(0.8866);transform-origin:0 0;"><u>С</u>формировать</div>
<div class="raised" style="left:176px;top:379px;width:81px;height:21px;"></div>
<div id="f_zk" class="t f" style="left:195px;top:383px;transform:scaleX(0.9300);transform-origin:0 0;"><u>З</u>акрыть</div>

<!-- Group: показать итоги -->
<div class="etched" style="left:368px;top:170px;width:224px;height:47px;"></div>
<div class="a" style="left:374px;top:168px;width:83px;height:4px;background:#d4d0c8;"></div>
<div id="f_g1" class="t f" style="left:377px;top:163px;transform:scaleX(0.9386);transform-origin:0 0;">Показать итоги</div>
<svg class="radio" style="left:377px;top:183px" width="12" height="12" viewBox="0 0 12 12"><use href="#rad"/><circle cx="6" cy="6" r="2" fill="#000"/></svg>
<div id="f_v1" class="t f" style="left:394px;top:183px;transform:scaleX(0.8813);transform-origin:0 0;">В валюте бух. учета</div>
<svg class="radio" style="left:377px;top:199px" width="12" height="12" viewBox="0 0 12 12"><use href="#rad"/></svg>
<div id="f_v2" class="t f" style="left:394px;top:199px;transform:scaleX(0.8858);transform-origin:0 0;">В валюте упр. учета</div>

<!-- Group: детализация -->
<div class="etched" style="left:368px;top:248px;width:224px;height:111px;"></div>
<div class="a" style="left:374px;top:246px;width:108px;height:4px;background:#d4d0c8;"></div>
<div id="f_g2" class="t f" style="left:377px;top:241px;transform:scaleX(0.9180);transform-origin:0 0;">Детализация отчета</div>
<div class="sunken" style="left:377px;top:260px;width:183px;height:89px;"></div>
<div class="a" style="left:379px;top:288px;width:179px;height:13px;background:#0a246a;"></div>
<div class="fchk" style="top:264px;"></div>
<div class="fchk" style="top:277px;"></div>
<div class="fchk" style="top:290px;"></div>
<div class="fchk" style="top:303px;"></div>
<div class="fchk" style="top:316px;"></div>
<svg style="left:382px;top:279px" width="7" height="7" viewBox="0 0 7 7" shape-rendering="crispEdges"><use href="#tick"/></svg>
<svg style="left:382px;top:305px" width="7" height="7" viewBox="0 0 7 7" shape-rendering="crispEdges"><use href="#tick"/></svg>
<svg style="left:382px;top:318px" width="7" height="7" viewBox="0 0 7 7" shape-rendering="crispEdges"><use href="#tick"/></svg>
<div id="f_l1" class="t f" style="left:392px;top:262px;transform:scaleX(0.9883);transform-origin:0 0;">Фирма</div>
<div id="f_l2" class="t f" style="left:392px;top:275px;transform:scaleX(0.9430);transform-origin:0 0;">Касса</div>
<div id="f_l3" class="t f" style="left:392px;top:288px;color:#fff;transform:scaleX(0.9156);transform-origin:0 0;">Валюта остатка</div>
<div id="f_l4" class="t f" style="left:392px;top:301px;transform:scaleX(0.9391);transform-origin:0 0;">День</div>
<div id="f_l5" class="t f" style="left:392px;top:314px;transform:scaleX(0.9264);transform-origin:0 0;">Документы движения</div>
<div class="raised" style="left:563px;top:262px;width:23px;height:21px;"></div>
<div class="raised" style="left:563px;top:288px;width:23px;height:21px;"></div>
<svg style="left:569px;top:266px" width="11" height="13" viewBox="0 0 11 13" shape-rendering="crispEdges"><path d="M5 0h1v1h1v1h1v1h1v1h1v1h1v1h-3v7h-5v-7h-3v-1h1v-1h1v-1h1v-1h1v-1h1z" fill="#000"/></svg>
<svg style="left:569px;top:292px" width="11" height="13" viewBox="0 0 11 13" shape-rendering="crispEdges"><path d="M3 0h5v7h3v1h-1v1h-1v1h-1v1h-1v1h-1v1h-1v-1h-1v-1h-1v-1h-1v-1h-1v-1h-1v-1h3z" fill="#000"/></svg>

<div class="chk" style="left:368px;top:366px;"></div>
<div id="f_dop" class="t f" style="left:387px;top:366px;transform:scaleX(0.9171);transform-origin:0 0;">Детализация по операциям</div>

<svg width="0" height="0" style="left:0;top:0"><defs>
 <g id="rad">
  <circle cx="6" cy="6" r="4.800" fill="#fff"/>
  <path d="M2.100 9.900 A5.500 5.500 0 0 1 9.900 2.100" fill="none" stroke="#808080" stroke-width="1.100"/>
  <path d="M9.900 2.100 A5.500 5.500 0 0 1 2.100 9.900" fill="none" stroke="#fff" stroke-width="1.100"/>
  <path d="M2.800 9.200 A4.500 4.500 0 0 1 9.200 2.800" fill="none" stroke="#404040" stroke-width="1"/>
  <path d="M9.200 2.800 A4.500 4.500 0 0 1 2.800 9.200" fill="none" stroke="#d4d0c8" stroke-width="1"/>
 </g>
 <path id="tick" d="M0 2h1v1h1v1h1v-1h1v-1h1v-1h1v-1h1v3h-1v1h-1v1h-1v1h-1v1h-1v-1h-1v-1h-1z" fill="#000"/>
</defs></svg>

<!-- BOTTOM -->
<!-- window tab bar -->
<div class="a" style="left:2px;top:696px;width:168px;height:20px;box-sizing:border-box;background:#d9d6cf;border:1px solid;border-color:#808080 #fff #fff #808080;box-shadow:inset 1px 1px 0 #404040;"></div>
<svg style="left:6px;top:699px" width="13" height="14" viewBox="0 0 13 14" shape-rendering="crispEdges">
 <path d="M0.500 0.500 H7.500 L10.500 3.500 V12.500 H0.500Z" fill="#f4fbf0" stroke="#50503c" stroke-width="1"/>
 <path d="M7.500 0.500 V3.500 H10.500" fill="none" stroke="#50503c"/>
 <path d="M11.500 4 V13.500 H1" fill="none" stroke="#000"/><path d="M10.500 4V12.500H1" fill="none" stroke="#202020"/>
 <path d="M2 3h6v2h-1v-1h-3v1h1v1h1v1h-1v1h-1v1h3v-1h1v2h-6v-1h1v-1h1v-1h1v-1h-1v-1h-1v-1h-1z" fill="#000"/>
 <rect x="7" y="10" width="3" height="1" fill="#108020"/><rect x="8" y="9" width="1" height="3" fill="#108020"/>
</svg>
<div id="b_tab" class="t b" style="left:21px;top:699px;transform:scaleX(1.0736);transform-origin:0 0;">Ведомость по кассе</div>
<div class="hl" style="left:0;top:718px;width:1024px;background:#808080;"></div>
<div class="hl" style="left:0;top:719px;width:1024px;background:#fff;"></div>
<!-- status bar -->
<div id="b_hint" class="t" style="left:2px;top:723px;transform:scaleX(0.9960);transform-origin:0 0;">Для получения подсказки нажмите F1</div>
<div class="thin-sunken" style="left:509px;top:722px;width:25px;height:16px;"></div>
<div class="thin-sunken" style="left:536px;top:722px;width:28px;height:16px;"></div>
<div id="b_num" class="t" style="left:539px;top:723px;transform:scaleX(0.8778);transform-origin:0 0;">NUM</div>
<div class="thin-sunken" style="left:566px;top:722px;width:151px;height:16px;"></div>
<div id="b_ta" class="t" style="left:569px;top:723px;white-space:pre;transform:scaleX(1.0308);transform-origin:0 0;">ТА: 30.07.14  12:06:15</div>
<div class="thin-sunken" style="left:719px;top:722px;width:152px;height:16px;"></div>
<div id="b_bi" class="t" style="left:722px;top:723px;transform:scaleX(1.0215);transform-origin:0 0;">БИ: 3 квартал 2015 г.</div>
<div class="thin-sunken" style="left:873px;top:722px;width:150px;height:16px;"></div>
<div id="b_tp" class="t" style="left:876px;top:723px;transform:scaleX(1.0177);transform-origin:0 0;">ТП:</div>
<!-- taskbar -->
<div class="hl" style="left:0;top:740px;width:1024px;background:#fff;"></div>
<div class="raised" style="left:2px;top:742px;width:51px;height:22px;"></div>
<svg style="left:5px;top:745px" width="16" height="16" viewBox="0 0 16 16">
 <path d="M1 3 C3 1.500 5 2 7 3 L6 7.500 C4 6.500 2 6.500 0.500 7.500Z" fill="#e04828"/>
 <path d="M8 3.500 C10 4.500 12 4.500 14.500 3 L13.500 7.500 C11 9 9 8.500 7 7.800Z" fill="#58b848"/>
 <path d="M0.300 8.500 C2 7.500 4 7.500 5.800 8.500 L4.800 13 C3 12 1 12 -0.500 13Z" fill="#3878e0"/>
 <path d="M6.800 9 C9 10 11 10 13.300 8.500 L12.300 13 C10 14.500 8 14 5.800 13.200Z" fill="#f0c020"/>
</svg>
<div id="b_start" class="t b" style="left:22px;top:746px;transform:scaleX(1.1034);transform-origin:0 0;">Пуск</div>
<!-- quick launch -->
<svg style="left:61px;top:745px" width="16" height="15" viewBox="0 0 16 15">
 <ellipse cx="8" cy="7.500" rx="7.500" ry="3.200" transform="rotate(-28 8 7.500)" fill="none" stroke="#58b0f0" stroke-width="1.300"/>
 <circle cx="7.500" cy="8" r="5.600" fill="#2c90e8" stroke="#1460b8" stroke-width="0.800"/>
 <path d="M4.500 7.300 H10.800 C10.500 4.800 5 4.800 4.500 7.300Z" fill="#e8f4ff"/>
 <path d="M4.500 8.800 H13 V10 H10.500 C9 11.800 5 11.500 4.500 8.800Z" fill="#e8f4ff"/>
 <path d="M12 2 C14 1 15.500 2 14.500 4" fill="none" stroke="#58b0f0" stroke-width="1.300"/>
</svg>
<svg style="left:84px;top:745px" width="16" height="15" viewBox="0 0 16 15">
 <path d="M3 1 H11 L14 3 V11 L11 14 H3 L0.500 11 V4Z" fill="#2060c8" stroke="#103c90" stroke-width="0.800"/>
 <path d="M4 3 H10.500 L12 4.500 V10 L10 12 H4.500 L3 10.500 V4.500Z" fill="#f0f6ff"/>
 <path d="M10 5 H6.500 C5 5 5 6 5 7.500 C5 9.500 5.500 10 7 10 H10" fill="none" stroke="#2060c8" stroke-width="1.800"/>
 <path d="M7 7.500 H11 M9.500 6 L11 7.500 L9.500 9" stroke="#202020" stroke-width="1" fill="none"/>
 <path d="M12.500 5 L15.500 6.500 L12.500 8Z" fill="#d03818"/>
 <path d="M10 1 L13.500 0.500 L14 3" fill="none" stroke="#78a8f0" stroke-width="1"/>
</svg>
<!-- task buttons -->
<div class="raised" style="left:131px;top:742px;width:160px;height:22px;"></div>
<svg style="left:135px;top:746px" width="16" height="14" viewBox="0 0 16 14">
 <path d="M0.500 2.500 Q0.500 0.500 2.500 0.500 H6 L7.500 2.500 H13.500 Q14.500 2.500 14.500 3.500 V12 Q14.500 13.500 13 13.500 H2 Q0.500 13.500 0.500 12Z" fill="#f8e080" stroke="#b09020"/>
 <path d="M1.500 5.500 H14" stroke="#fff8c0"/>
</svg>
<div id="b_t1" class="t" style="left:155px;top:746px;transform:scaleX(1.0334);transform-origin:0 0;">C:\Общая\Бухгалтерия...</div>
<div class="raised" style="left:294px;top:742px;width:160px;height:22px;"></div>
<svg style="left:298px;top:747px" width="16" height="12" viewBox="0 0 16 12">
 <path d="M0.500 5 L3 1.500 H13 L15.500 5 V9.500 H0.500Z" fill="#c8c8c8" stroke="#707070"/>
 <path d="M0.500 5 H15.500" stroke="#707070"/>
 <path d="M3 2.500H13L14.500 4.500H1.500Z" fill="#f0f0f0"/>
 <rect x="11" y="6.500" width="3" height="1.500" fill="#40c040"/>
</svg>
<div id="b_t2" class="t" style="left:318px;top:746px;transform:scaleX(1.0778);transform-origin:0 0;">E:\</div>
<div class="a" style="left:457px;top:742px;width:159px;height:22px;box-sizing:border-box;background:#eae8e4;border:1px solid;border-color:#404040 #fff #fff #404040;box-shadow:inset 1px 1px 0 #808080;"></div>
<svg style="left:461px;top:745px" width="17" height="17" viewBox="0 0 17 17">
 <path d="M1 3 L7 1.500 L16 1 V9.500 L9 11.500 L4 13.500 L1 11Z" fill="#fcf418"/>
 <path d="M2.500 9.500 C3 4 7 2.500 6.500 6 C6 9.500 9 8 15 3" stroke="#c01048" stroke-width="2.200" fill="none"/>
 <path d="M3 10 C5 6 6 5 6 7.500 C7 9 10 6.500 14.500 3.500" stroke="#5a208a" stroke-width="1" fill="none"/>
 <text x="8" y="17" font-family="Liberation Sans, sans-serif" font-weight="bold" font-size="6" fill="#000">V7</text>
</svg>
<div id="b_t3" class="t b" style="left:482px;top:746px;transform:scaleX(1.0496);transform-origin:0 0;">1С:Предприятие - То...</div>
<!-- RL -->
<div class="a" style="left:834px;top:746px;width:12px;height:16px;background:#0a246a;"></div>
<div id="b_rl" class="t" style="left:834px;top:747px;color:#fff;transform:scaleX(0.7822);transform-origin:0 0;">RL</div>
<!-- tray -->
<div class="thin-sunken" style="left:870px;top:742px;width:152px;height:23px;"></div>
<svg style="left:874px;top:745px" width="14" height="16" viewBox="0 0 14 16">
 <path d="M2 1 L8 4 L6 6 L10 8 L5 10 L6 7 L2 6Z" fill="#30a030" stroke="#106010" stroke-width="0.600"/>
 <path d="M3 10 L11 7 L13 11 L6 15 L2 13Z" fill="#e8e8e8" stroke="#404040" stroke-width="0.800"/>
 <path d="M5 12 L10 10" stroke="#404040"/>
</svg>
<svg style="left:890px;top:745px" width="17" height="16" viewBox="0 0 17 16">
 <rect x="0" y="0" width="17" height="16" fill="#102060"/>
 <circle cx="6" cy="3.500" r="2" fill="#e0e8f0"/>
 <path d="M2 9 C3 5 9 5 10 9Z" fill="#e0e8f0"/>
 <path d="M1 12 C5 9 12 9 16 13 M3 14 C6 12 11 12 14 15" stroke="#fff" fill="none"/>
</svg>
<svg style="left:909px;top:745px" width="15" height="16" viewBox="0 0 15 16">
 <rect x="6" y="1" width="8" height="7" fill="#6870c0" stroke="#303880"/>
 <rect x="1" y="5" width="8" height="7" fill="#8088d0" stroke="#303880"/>
 <rect x="2" y="13" width="7" height="2" fill="#505890"/><rect x="8" y="9" width="6" height="2" fill="#505890"/>
</svg>
<svg style="left:927px;top:745px" width="16" height="16" viewBox="0 0 16 16">
 <rect x="3" y="1" width="9" height="8" fill="#a8d0f8" stroke="#204080"/>
 <rect x="0" y="8" width="13" height="7" fill="#101010"/>
 <rect x="11" y="6" width="4" height="9" fill="#f0f0f0" stroke="#404040" stroke-width="0.800"/>
</svg>
<svg style="left:945px;top:746px" width="17" height="15" viewBox="0 0 17 15">
 <rect x="0.500" y="1.500" width="12" height="9" fill="#e0dcd4" stroke="#909090"/>
 <path d="M11 3 L16.500 14 H5.500Z" fill="#f8d020" stroke="#806000" stroke-width="0.800"/>
 <rect x="10.500" y="7" width="1.200" height="4" fill="#000"/><rect x="10.500" y="12" width="1.200" height="1.200" fill="#000"/>
</svg>
<svg style="left:963px;top:747px" width="16" height="12" viewBox="0 0 16 12">
 <rect x="0" y="0" width="16" height="12" fill="#a8d060" opacity="0.550"/>
 <path d="M1 6 C4 1 10 1 13 5 C10 10 5 10 3 6 C5 3 9 4 10 6 C8 8 6 7 6 6" fill="none" stroke="#78b020" stroke-width="1.400"/>
</svg>
<div id="b_clk" class="t" style="left:986px;top:747px;transform:scaleX(0.9807);transform-origin:0 0;">12:44</div>

</body>
</html>
